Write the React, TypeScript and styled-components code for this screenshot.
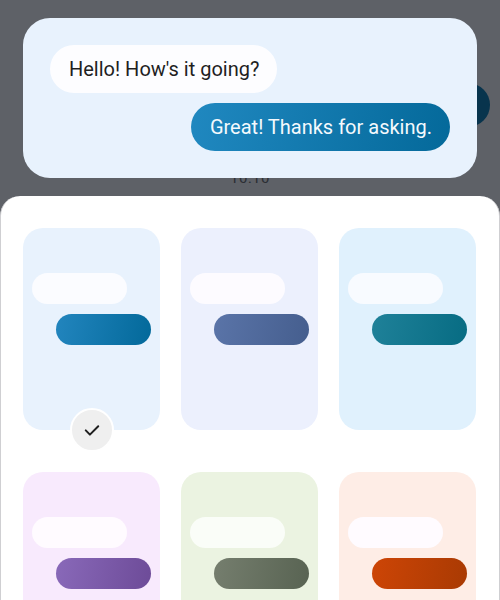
import React from "react";
import styled, { createGlobalStyle } from "styled-components";

const Global = createGlobalStyle`
  html, body { margin: 0; padding: 0; }
  body { font-family: Roboto, "Noto Sans", Arial, sans-serif; background: #5e6167; }
`;

const Screen = styled.div`
  position: relative;
  width: 500px;
  height: 600px;
  overflow: hidden;
  background: #5e6167;
  display: flex;
  flex-direction: column;
`;

const Backdrop = styled.div`
  height: 196px;
  flex: none;
  display: flex;
  flex-direction: column;
  align-items: stretch;
`;

const AvatarRow = styled.div`
  display: flex;
  justify-content: flex-end;
  padding: 83px 10px 0 0;
`;

const Avatar = styled.div`
  width: 44px;
  height: 44px;
  border-radius: 50%;
  background: #08344d;
`;

const Time = styled.div`
  margin-top: 42px;
  text-align: center;
  font-size: 15px;
  color: #2b2e34;
  letter-spacing: 0.5px;
`;

const Preview = styled.div`
  position: absolute;
  left: 23px;
  top: 18px;
  width: 454px;
  height: 160px;
  box-sizing: border-box;
  padding: 27px 27px 0 27px;
  background: #e8f2fd;
  border-radius: 27px;
  display: flex;
  flex-direction: column;
  gap: 10px;
`;

const Bubble = styled.div<{ $out?: boolean }>`
  align-self: ${(p) => (p.$out ? "flex-end" : "flex-start")};
  height: 48px;
  box-sizing: border-box;
  padding: 0 18px 0 19px;
  display: flex;
  align-items: center;
  border-radius: 24px;
  font-size: 20px;
  color: ${(p) => (p.$out ? "#f4f9fd" : "#1f1f1f")};
  background: ${(p) =>
    p.$out ? "linear-gradient(100deg, #2088c0, #04699a)" : "#fdfdff"};
  white-space: nowrap;
`;

const Sheet = styled.div`
  flex: 1;
  background: #ffffff;
  border-radius: 20px 20px 0 0;
  border-left: 1px solid #cfcfd2;
  border-right: 1px solid #cfcfd2;
  padding: 32px 22px 0 22px;
`;

const Grid = styled.div`
  display: grid;
  grid-template-columns: repeat(3, 137px);
  column-gap: 21px;
  row-gap: 42px;
`;

const Tile = styled.div<{ $bg: string }>`
  position: relative;
  height: 202px;
  border-radius: 20px;
  background: ${(p) => p.$bg};
  box-sizing: border-box;
  padding: 45px 9px 0 9px;
  display: flex;
  flex-direction: column;
  gap: 10px;
`;

const MiniIn = styled.div<{ $c: string }>`
  align-self: flex-start;
  width: 95px;
  height: 31px;
  border-radius: 16px;
  background: ${(p) => p.$c};
`;

const MiniOut = styled.div<{ $from: string; $to: string }>`
  align-self: flex-end;
  width: 95px;
  height: 31px;
  border-radius: 16px;
  background: linear-gradient(100deg, ${(p) => p.$from}, ${(p) => p.$to});
`;

const Check = styled.div`
  position: absolute;
  left: 47px;
  bottom: -22px;
  width: 40px;
  height: 40px;
  border-radius: 50%;
  background: #efefef;
  border: 2px solid #ffffff;
  display: flex;
  align-items: center;
  justify-content: center;
`;

const themes = [
  { bg: "#e8f2fd", inc: "#fbfcff", from: "#2285be", to: "#03699a", sel: true },
  { bg: "#ecf0fd", inc: "#fdfbff", from: "#5a74a8", to: "#455e8e" },
  { bg: "#e0f1fd", inc: "#f8fbff", from: "#1f8199", to: "#076c83" },
  { bg: "#f8eafd", inc: "#fffbff", from: "#8969b9", to: "#6d4b98" },
  { bg: "#ebf3e1", inc: "#fafdf8", from: "#757e6e", to: "#586352" },
  { bg: "#feede6", inc: "#fffbff", from: "#cd4506", to: "#a93a03" },
];

export default function App() {
  return (
    <>
      <Global />
      <Screen>
        <Backdrop>
          <AvatarRow>
            <Avatar />
          </AvatarRow>
          <Time>10:10</Time>
        </Backdrop>
        <Sheet>
          <Grid>
            {themes.map((t, i) => (
              <Tile key={i} $bg={t.bg}>
                <MiniIn $c={t.inc} />
                <MiniOut $from={t.from} $to={t.to} />
                {t.sel && (
                  <Check>
                    <svg width="20" height="20" viewBox="0 0 24 24" fill="none">
                      <path
                        d="M4.5 12.5l5 5L19.5 7.5"
                        stroke="#1f1f1f"
                        strokeWidth="2.4"
                        strokeLinecap="round"
                        strokeLinejoin="round"
                      />
                    </svg>
                  </Check>
                )}
              </Tile>
            ))}
          </Grid>
        </Sheet>
        <Preview>
          <Bubble>Hello! How's it going?</Bubble>
          <Bubble $out>Great! Thanks for asking.</Bubble>
        </Preview>
      </Screen>
    </>
  );
}
